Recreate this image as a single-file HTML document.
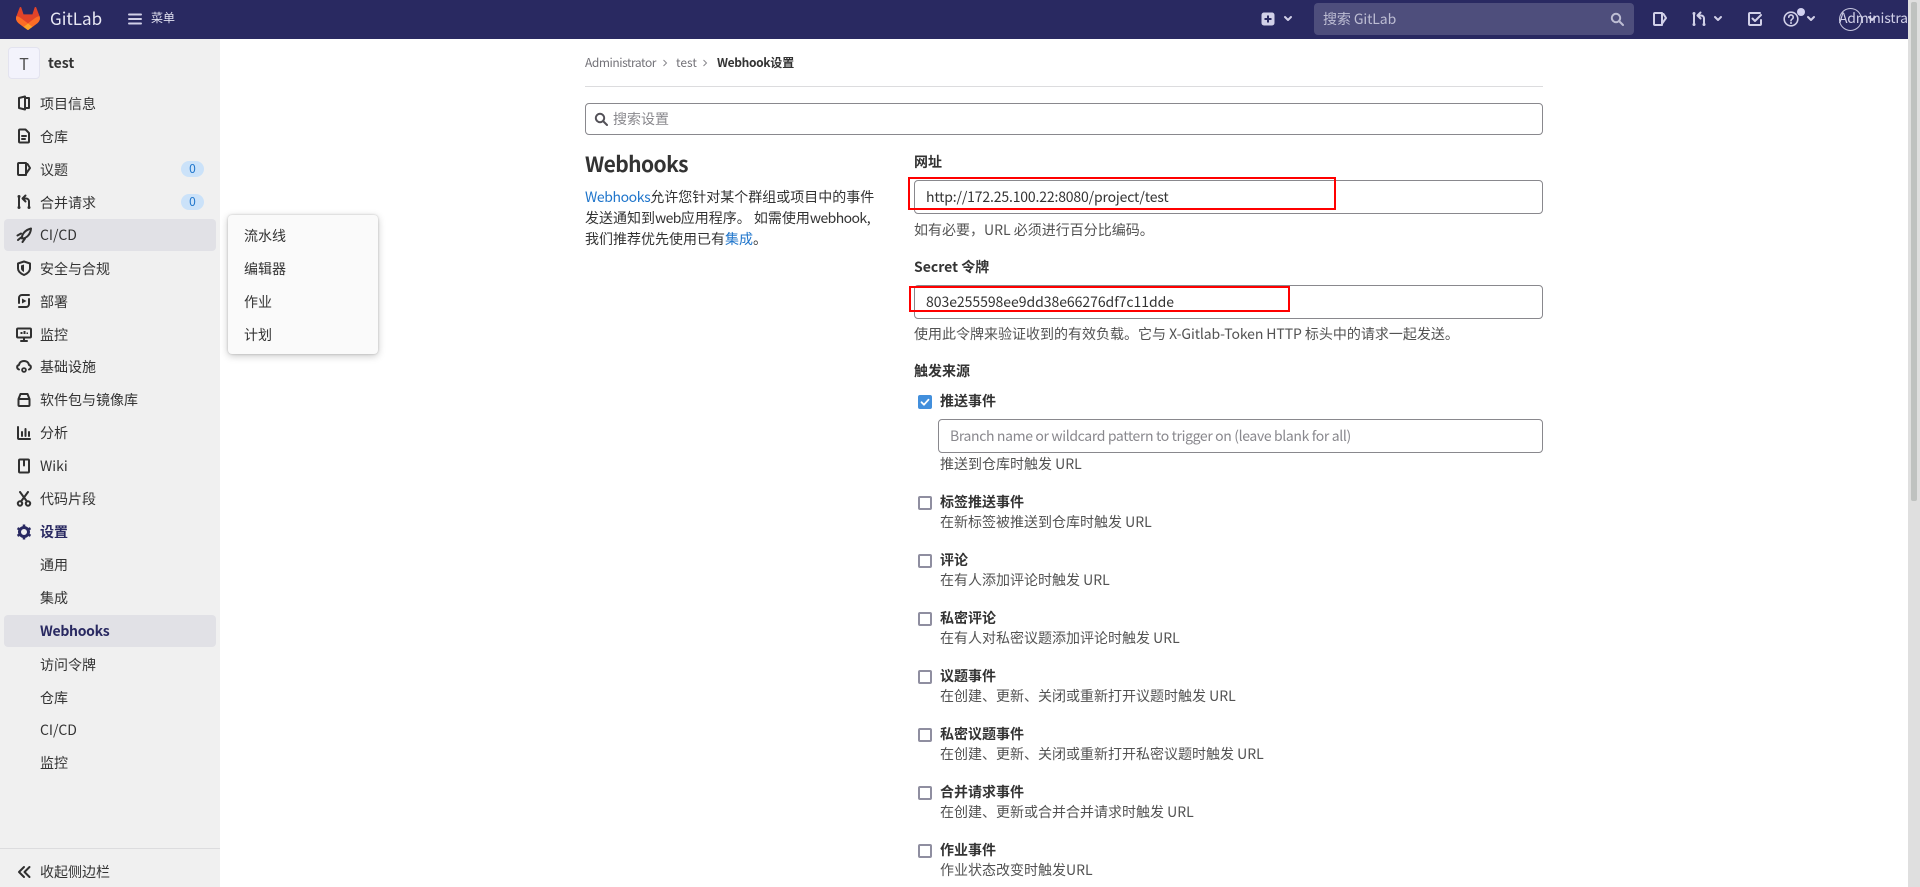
<!DOCTYPE html>
<html lang="zh"><head><meta charset="utf-8"><title>Webhook设置</title>
<style>
*{box-sizing:border-box}
html,body{margin:0;padding:0;width:1920px;height:887px;overflow:hidden;background:#fff}
body{position:relative;font-family:"Noto Sans CJK SC","Liberation Sans",sans-serif;font-size:14px;color:#333}
.a{position:absolute}
.t{position:absolute;white-space:nowrap;line-height:20px;height:20px;margin-top:1px}
.b{font-weight:700}
.h{color:#525252}
svg{position:absolute;display:block}
.i{fill:none;stroke:#303030;stroke-width:2;stroke-linecap:round;stroke-linejoin:round}
.n{fill:none;stroke:#d1d0e8;stroke-width:2;stroke-linecap:round;stroke-linejoin:round}
.inp{position:absolute;border:1px solid #89888d;border-radius:4px;background:#fff}
.red{position:absolute;border:2px solid #f00}
.cb{position:absolute;left:918px;width:14px;height:14px;border:2px solid #8f8ea0;border-radius:2px;background:#fff}
</style></head><body>

<!-- navbar -->
<div class="a" style="left:0;top:0;width:1920px;height:39px;background:#292961"></div>
<svg style="left:16px;top:7px" width="24" height="23" viewBox="0 0 25 24"><path d="m24.507 9.5-.034-.09L21.082.562a.896.896 0 0 0-1.694.091l-2.29 7.01H7.825L5.535.653a.898.898 0 0 0-1.694-.09L.451 9.411.416 9.5a6.297 6.297 0 0 0 2.09 7.278l.012.01.03.022 5.16 3.867 2.56 1.935 1.554 1.176a1.051 1.051 0 0 0 1.268 0l1.555-1.176 2.56-1.935 5.197-3.89.014-.01A6.297 6.297 0 0 0 24.507 9.5Z" fill="#E24329"/><path d="m24.507 9.5-.034-.09a11.44 11.44 0 0 0-4.56 2.051l-7.447 5.632 4.742 3.584 5.197-3.89.014-.01A6.297 6.297 0 0 0 24.507 9.5Z" fill="#FC6D26"/><path d="m7.707 20.677 2.56 1.935 1.555 1.176a1.051 1.051 0 0 0 1.268 0l1.555-1.176 2.56-1.935-4.743-3.584-4.755 3.584Z" fill="#FCA326"/><path d="M5.01 11.461a11.43 11.43 0 0 0-4.56-2.05L.416 9.5a6.297 6.297 0 0 0 2.09 7.278l.012.01.03.022 5.16 3.867 4.745-3.584-7.444-5.632Z" fill="#FC6D26"/></svg>
<div class="t" style="left:50px;top:7px;font-size:17px;color:#e8e8f4">GitLab</div>
<svg style="left:128px;top:11px" width="14" height="16" viewBox="0 0 14 16"><path class="n" d="M1 3.5h12M1 8h12M1 12.5h12"/></svg>
<div class="t" style="left:151px;top:7px;font-size:12px;color:#e0e0f0">菜单</div>

<svg style="left:1261px;top:12px" width="14" height="14" viewBox="0 0 14 14"><rect x="0.5" y="0.5" width="13" height="13" rx="2.5" fill="#d1d0e8"/><path d="M7 3.5v7M3.5 7h7" stroke="#292961" stroke-width="2"/></svg>
<svg style="left:1283px;top:15px" width="10" height="8" viewBox="0 0 10 8"><path class="n" d="M2 2l3 3 3-3"/></svg>
<div class="a" style="left:1314px;top:3px;width:320px;height:32px;border-radius:4px;background:#4e4e7c"></div>
<div class="t" style="left:1323px;top:8px;color:#bdbdd3;letter-spacing:-.1px">搜索 GitLab</div>
<svg style="left:1610px;top:12px" width="14" height="14" viewBox="0 0 14 14"><circle cx="6" cy="6" r="4.2" fill="none" stroke="#bdbdd3" stroke-width="2"/><path d="M9.5 9.5L13 13" stroke="#bdbdd3" stroke-width="2" stroke-linecap="round"/></svg>
<svg style="left:1652px;top:11px" width="16" height="16" viewBox="0 0 16 16"><path class="n" d="M2 3a1 1 0 0 1 1-1h7v12H3a1 1 0 0 1-1-1zM10 3h1.500L14 7l-3.500 5"/></svg>
<svg style="left:1691px;top:11px" width="16" height="16" viewBox="0 0 16 16"><path class="n" d="M3 3v10M13 12.500V7.500a3 3 0 0 0-3-3H7.500M9.500 1.500L6.500 4.500 9.500 7.500"/><circle cx="3" cy="2.500" r="1.500" fill="#d1d0e8"/><circle cx="3" cy="13.500" r="1.500" fill="#d1d0e8"/><circle cx="13" cy="13.500" r="1.500" fill="#d1d0e8"/></svg>
<svg style="left:1713px;top:15px" width="10" height="8" viewBox="0 0 10 8"><path class="n" d="M2 2l3 3 3-3"/></svg>
<svg style="left:1747px;top:11px" width="16" height="16" viewBox="0 0 16 16"><path class="n" d="M13 2H3a1 1 0 0 0-1 1v10a1 1 0 0 0 1 1h10a1 1 0 0 0 1-1V9M5.500 7.500L8 10l6-6"/></svg>
<svg style="left:1783px;top:11px" width="16" height="16" viewBox="0 0 16 16"><circle cx="8" cy="8" r="6.800" fill="none" stroke="#d1d0e8" stroke-width="1.600"/><path d="M5.800 6.200a2.200 2.200 0 1 1 3.400 1.800c-.8.500-1.200.9-1.200 1.800" fill="none" stroke="#d1d0e8" stroke-width="1.600" stroke-linecap="round"/><circle cx="8" cy="12" r="1" fill="#d1d0e8"/></svg>
<div class="a" style="left:1797px;top:8px;width:8px;height:8px;border-radius:50%;background:#d1d0f0"></div>
<svg style="left:1806px;top:15px" width="10" height="8" viewBox="0 0 10 8"><path class="n" d="M2 2l3 3 3-3"/></svg>
<div class="a" style="left:1839px;top:8px;width:23px;height:23px;border-radius:50%;border:1px solid #c8c8e0"></div>
<div class="a" style="left:1839px;top:0;width:69px;height:39px;overflow:hidden"><div class="t" style="left:0;top:7px;color:#d1d0e8;font-size:14px;letter-spacing:-.2px">Administrator</div></div>
<svg style="left:1867px;top:15px" width="10" height="8" viewBox="0 0 10 8"><path class="n" d="M2 2l3 3 3-3"/></svg>

<!-- scrollbar -->
<div class="a" style="left:1908px;top:0;width:12px;height:887px;background:#dfdfdf"></div>
<div class="a" style="left:1911px;top:2px;width:6px;height:499px;background:#bfc2c0;border-radius:2px"></div>

<!-- sidebar -->
<div class="a" style="left:0;top:39px;width:220px;height:848px;background:#f0f0f0"></div>
<div class="a" style="left:8px;top:47px;width:32px;height:32px;border-radius:4px;background:#f3f3fc;border:1px solid #e3e3ef"></div>
<div class="t" style="left:8px;top:52px;width:32px;text-align:center;font-size:16px;color:#4f4f4f">T</div>
<div class="t b" style="left:48px;top:52px">test</div>

<div class="a" style="left:4px;top:219px;width:212px;height:32px;border-radius:4px;background:#e1e1e6"></div>
<div class="a" style="left:4px;top:615px;width:212px;height:32px;border-radius:4px;background:#e1e1e6"></div>

<!-- sidebar icons -->
<svg style="left:16px;top:95px" width="16" height="16" viewBox="0 0 16 16"><path class="i" d="M3 3l6-1.500v13L3 13zM9 3h4v10H9"/></svg>
<svg style="left:16px;top:128px" width="16" height="16" viewBox="0 0 16 16"><path class="i" d="M3 2.500a1 1 0 0 1 1-1h5.500L13 5v8.500a1 1 0 0 1-1 1H4a1 1 0 0 1-1-1zM6 8h4M6 11h3"/></svg>
<svg style="left:16px;top:161px" width="16" height="16" viewBox="0 0 16 16"><path class="i" d="M2 3a1 1 0 0 1 1-1h7v12H3a1 1 0 0 1-1-1zM10 3h1.500L14 7l-3.500 5"/></svg>
<svg style="left:16px;top:194px" width="16" height="16" viewBox="0 0 16 16"><path class="i" d="M3 3v10M13 12.500V7.500a3 3 0 0 0-3-3H7.500M9.500 1.500L6.500 4.500 9.500 7.500"/><circle cx="3" cy="2.500" r="1.500" fill="#303030"/><circle cx="3" cy="13.500" r="1.500" fill="#303030"/><circle cx="13" cy="13.500" r="1.500" fill="#303030"/></svg>
<svg style="left:16px;top:227px" width="16" height="16" viewBox="0 0 16 16"><path class="i" d="M6 11.500C5.500 7.500 9 3 15 1.500c-.5 6-4.500 10-9 10zM1.500 8.500L5 6.500M6.500 15l2.500-3.500M2 13l3-2.500"/></svg>
<svg style="left:16px;top:260px" width="16" height="16" viewBox="0 0 16 16"><path class="i" d="M8 1.500l6 2v5c0 3-2.500 5-6 6.500-3.500-1.500-6-3.500-6-6.500v-5z"/><path d="M8 4.500l-3 1v3c0 1.500 1.300 2.800 3 3.500z" fill="#303030"/></svg>
<svg style="left:16px;top:293px" width="16" height="16" viewBox="0 0 16 16"><path class="i" d="M3 10V5a3 3 0 0 1 3-3h7M13 6v5a3 3 0 0 1-3 3H3"/><path d="M6 5.500l4.500 2.500L6 10.500z" fill="#303030"/></svg>
<svg style="left:16px;top:326px" width="16" height="16" viewBox="0 0 16 16"><rect x="1" y="2.500" width="14" height="9" rx="1" class="i"/><path class="i" d="M5 15h6M8 12v3"/><path d="M4.500 6h2v2h-2zM7.500 5h2v3h-2zM10.500 6.500h1.500v1.500h-1.500z" fill="#303030"/></svg>
<svg style="left:16px;top:359px" width="16" height="16" viewBox="0 0 16 16"><path class="i" d="M3 10.500C.500 9.500.500 6.500 3 6c.5-3 3-4 5-4s4.500 1 5 4c2.500.500 2.500 3.500 0 4.500"/><circle cx="8" cy="11" r="2.800" fill="#303030"/><circle cx="8" cy="11" r="1" fill="#f0f0f0"/></svg>
<svg style="left:16px;top:392px" width="16" height="16" viewBox="0 0 16 16"><path class="i" d="M2.500 7h11v6a1 1 0 0 1-1 1h-9a1 1 0 0 1-1-1zM2.500 7l2-5h7l2 5"/></svg>
<svg style="left:16px;top:425px" width="16" height="16" viewBox="0 0 16 16"><path class="i" d="M2 2v11a1 1 0 0 0 1 1h11M6 7v4M9.500 4v7M13 7v4"/></svg>
<svg style="left:16px;top:458px" width="16" height="16" viewBox="0 0 16 16"><path class="i" d="M3 2.500a1 1 0 0 1 1-1h8a1 1 0 0 1 1 1v11a1 1 0 0 1-1 1H4a1 1 0 0 1-1-1zM8 1.500v6"/></svg>
<svg style="left:16px;top:491px" width="16" height="16" viewBox="0 0 16 16"><circle cx="4" cy="12.500" r="2.200" class="i"/><circle cx="12" cy="12.500" r="2.200" class="i"/><path class="i" d="M5 10.500L12 1M11 10.500L4 1"/></svg>
<svg style="left:16px;top:524px" width="16" height="16" viewBox="0 0 16 16"><circle cx="8" cy="8" r="4.500" fill="none" stroke="#292961" stroke-width="3"/><path d="M8 .5v3M8 12.500v3M1.500 4.200l2.600 1.500M11.900 10.300l2.600 1.500M1.500 11.800l2.600-1.500M11.900 5.700l2.600-1.500" stroke="#292961" stroke-width="2.500" fill="none"/></svg>

<!-- sidebar labels -->
<div class="t" style="left:40px;top:93px">项目信息</div>
<div class="t" style="left:40px;top:126px">仓库</div>
<div class="t" style="left:40px;top:159px">议题</div>
<div class="t" style="left:40px;top:192px">合并请求</div>
<div class="t" style="left:40px;top:224px">CI/CD</div>
<div class="t" style="left:40px;top:258px">安全与合规</div>
<div class="t" style="left:40px;top:291px">部署</div>
<div class="t" style="left:40px;top:324px">监控</div>
<div class="t" style="left:40px;top:356px">基础设施</div>
<div class="t" style="left:40px;top:389px">软件包与镜像库</div>
<div class="t" style="left:40px;top:422px">分析</div>
<div class="t" style="left:40px;top:455px">Wiki</div>
<div class="t" style="left:40px;top:488px">代码片段</div>
<div class="t b" style="left:40px;top:521px;color:#292961">设置</div>
<div class="t" style="left:40px;top:554px">通用</div>
<div class="t" style="left:40px;top:587px">集成</div>
<div class="t b" style="left:40px;top:620px;color:#292961;letter-spacing:-.3px">Webhooks</div>
<div class="t" style="left:40px;top:654px">访问令牌</div>
<div class="t" style="left:40px;top:687px">仓库</div>
<div class="t" style="left:40px;top:719px">CI/CD</div>
<div class="t" style="left:40px;top:752px">监控</div>

<div class="a" style="left:181px;top:161px;width:23px;height:16px;border-radius:8px;background:#cbe2f9"></div>
<div class="t" style="left:181px;top:158px;width:23px;text-align:center;font-size:12px;color:#1f75cb">0</div>
<div class="a" style="left:181px;top:194px;width:23px;height:16px;border-radius:8px;background:#cbe2f9"></div>
<div class="t" style="left:181px;top:191px;width:23px;text-align:center;font-size:12px;color:#1f75cb">0</div>

<div class="a" style="left:0;top:848px;width:220px;height:1px;background:#dcdcde"></div>
<svg style="left:16px;top:864px" width="16" height="16" viewBox="0 0 16 16"><path class="i" d="M8 3L3 8l5 5M13.500 3l-5 5 5 5"/></svg>
<div class="t" style="left:40px;top:861px">收起侧边栏</div>

<!-- flyout -->
<div class="a" style="left:228px;top:215px;width:150px;height:139px;border-radius:4px;background:#fafafa;box-shadow:0 2px 8px rgba(0,0,0,.22),0 0 2px rgba(0,0,0,.2)"></div>
<div class="t" style="left:244px;top:225px">流水线</div>
<div class="t" style="left:244px;top:258px">编辑器</div>
<div class="t" style="left:244px;top:291px">作业</div>
<div class="t" style="left:244px;top:324px">计划</div>

<!-- breadcrumb -->
<div class="t" style="left:585px;top:52px;font-size:12px;color:#737278;letter-spacing:-.45px">Administrator</div>
<svg style="left:661px;top:58px" width="8" height="10" viewBox="0 0 8 10"><path d="M2.500 2l3 3-3 3" fill="none" stroke="#89888d" stroke-width="1"/></svg>
<div class="t" style="left:676px;top:52px;font-size:12px;color:#737278">test</div>
<svg style="left:701px;top:58px" width="8" height="10" viewBox="0 0 8 10"><path d="M2.500 2l3 3-3 3" fill="none" stroke="#89888d" stroke-width="1"/></svg>
<div class="t b" style="left:717px;top:52px;font-size:12px"><span style="letter-spacing:-.35px">Webhook</span>设置</div>
<div class="a" style="left:585px;top:86px;width:958px;height:1px;background:#dcdcde"></div>

<!-- search -->
<div class="inp" style="left:585px;top:103px;width:958px;height:32px"></div>
<svg style="left:594px;top:112px" width="14" height="14" viewBox="0 0 14 14"><circle cx="6" cy="6" r="4.200" fill="none" stroke="#535158" stroke-width="2"/><path d="M9.500 9.500L13 13" stroke="#535158" stroke-width="2" stroke-linecap="round"/></svg>
<div class="t" style="left:613px;top:108px;color:#89888d">搜索设置</div>

<!-- left col -->
<div class="t b" style="left:585px;top:152px;font-size:21px;line-height:22px;height:22px;letter-spacing:-.6px">Webhooks</div>
<div class="t" style="left:585px;top:186px"><span style="color:#1f75cb;letter-spacing:-.4px">Webhooks</span>允许您针对某个群组或项目中的事件</div>
<div class="t" style="left:585px;top:207px">发送通知到<span style="letter-spacing:-.6px">web</span>应用程序。 如需使用<span style="letter-spacing:-.6px">webhook,</span></div>
<div class="t" style="left:585px;top:228px">我们推荐优先使用已有<span style="color:#1f75cb">集成</span>。</div>

<!-- right col -->
<div class="t b" style="left:914px;top:151px">网址</div>
<div class="inp" style="left:914px;top:180px;width:629px;height:34px"></div>
<div class="t" style="left:926px;top:186px;letter-spacing:-.16px">http://172.25.100.22:8080/project/test</div>
<div class="red" style="left:908px;top:177px;width:428px;height:33px"></div>
<div class="t h" style="left:914px;top:219px">如有必要，URL 必须进行百分比编码。</div>

<div class="t b" style="left:914px;top:256px">Secret 令牌</div>
<div class="inp" style="left:914px;top:285px;width:629px;height:34px"></div>
<div class="t" style="left:926px;top:291px;letter-spacing:-.04px">803e255598ee9dd38e66276df7c11dde</div>
<div class="red" style="left:909px;top:286px;width:381px;height:26px"></div>
<div class="t h" style="left:914px;top:323px">使用此令牌来验证收到的有效负载。它与 <span style="letter-spacing:-.1px">X-Gitlab-Token HTTP</span> 标头中的请求一起发送。</div>

<div class="t b" style="left:914px;top:360px">触发来源</div>

<div class="cb" style="top:395px;background:#428fdc;border-color:#428fdc"></div>
<svg style="left:918px;top:395px" width="14" height="14" viewBox="0 0 14 14"><path d="M3.500 7.200l2.500 2.500 4.500-5" fill="none" stroke="#fff" stroke-width="1.800" stroke-linecap="round" stroke-linejoin="round"/></svg>
<div class="t b" style="left:940px;top:390px">推送事件</div>
<div class="inp" style="left:938px;top:419px;width:605px;height:34px"></div>
<div class="t" style="left:950px;top:425px;color:#89888d;letter-spacing:-.36px">Branch name or wildcard pattern to trigger on (leave blank for all)</div>
<div class="t h" style="left:940px;top:453px">推送到仓库时触发 URL</div>

<div class="cb" style="top:496px"></div>
<div class="t b" style="left:940px;top:491px">标签推送事件</div>
<div class="t h" style="left:940px;top:511px">在新标签被推送到仓库时触发 URL</div>

<div class="cb" style="top:554px"></div>
<div class="t b" style="left:940px;top:549px">评论</div>
<div class="t h" style="left:940px;top:569px">在有人添加评论时触发 URL</div>

<div class="cb" style="top:612px"></div>
<div class="t b" style="left:940px;top:607px">私密评论</div>
<div class="t h" style="left:940px;top:627px">在有人对私密议题添加评论时触发 URL</div>

<div class="cb" style="top:670px"></div>
<div class="t b" style="left:940px;top:665px">议题事件</div>
<div class="t h" style="left:940px;top:685px">在创建、更新、关闭或重新打开议题时触发 URL</div>

<div class="cb" style="top:728px"></div>
<div class="t b" style="left:940px;top:723px">私密议题事件</div>
<div class="t h" style="left:940px;top:743px">在创建、更新、关闭或重新打开私密议题时触发 URL</div>

<div class="cb" style="top:786px"></div>
<div class="t b" style="left:940px;top:781px">合并请求事件</div>
<div class="t h" style="left:940px;top:801px">在创建、更新或合并合并请求时触发 URL</div>

<div class="cb" style="top:844px"></div>
<div class="t b" style="left:940px;top:839px">作业事件</div>
<div class="t h" style="left:940px;top:859px">作业状态改变时触发URL</div>

</body></html>
